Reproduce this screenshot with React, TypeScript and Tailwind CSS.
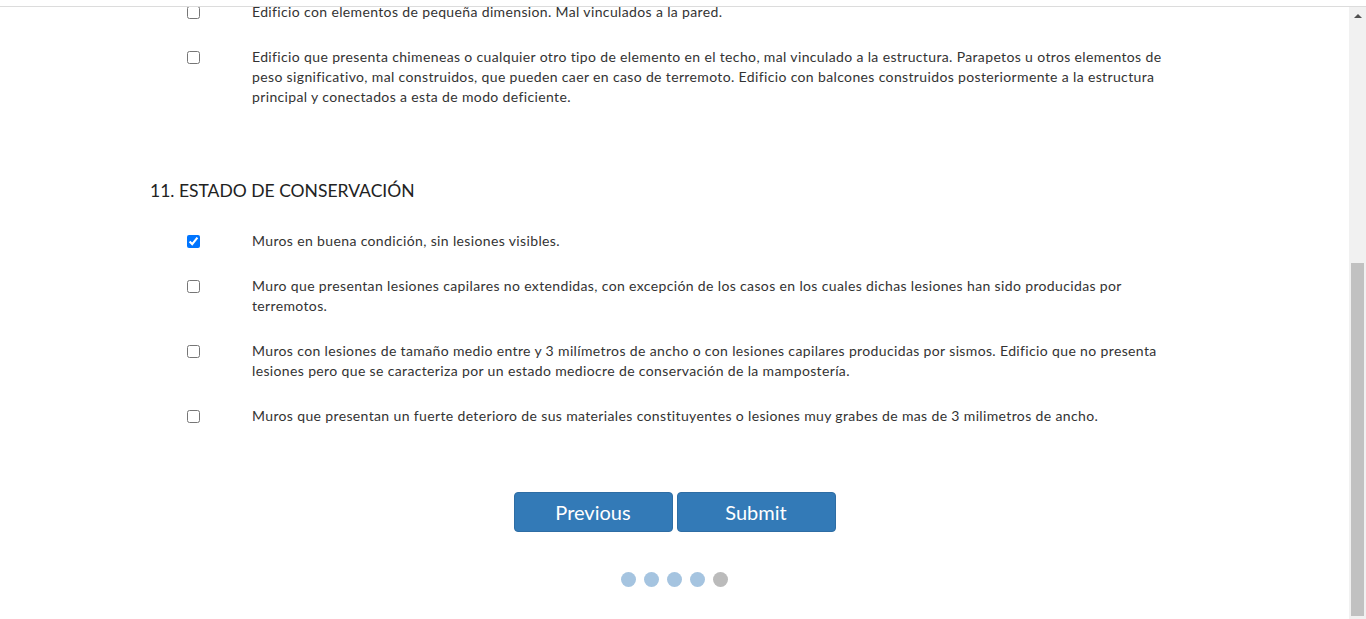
import React from 'react';

type Item = { lines: string[]; checked?: boolean };

const prevItems: Item[] = [
    { lines: ["Edificio con elementos de pequeña dimension. Mal vinculados a la pared."] },
    {
        lines: [
            "Edificio que presenta chimeneas o cualquier otro tipo de elemento en el techo, mal vinculado a la estructura. Parapetos u otros elementos de",
            "peso significativo, mal construidos, que pueden caer en caso de terremoto. Edificio con balcones construidos posteriormente a la estructura",
            "principal y conectados a esta de modo deficiente.",
        ],
    },
];

const conservacion: Item[] = [
    { lines: ["Muros en buena condición, sin lesiones visibles."], checked: true },
    {
        lines: [
            "Muro que presentan lesiones capilares no extendidas, con excepción de los casos en los cuales dichas lesiones han sido producidas por",
            "terremotos.",
        ],
    },
    {
        lines: [
            "Muros con lesiones de tamaño medio entre y 3 milímetros de ancho o con lesiones capilares producidas por sismos. Edificio que no presenta",
            "lesiones pero que se caracteriza por un estado mediocre de conservación de la mampostería.",
        ],
    },
    { lines: ["Muros que presentan un fuerte deterioro de sus materiales constituyentes o lesiones muy grabes de mas de 3 milimetros de ancho."] },
];

const OptionRow = ({ item }: { item: Item }) => (
    <label className="flex items-start">
        <div className="w-[102px] pl-[37px] h-5 flex items-center shrink-0">
            <input type="checkbox" defaultChecked={item.checked} className="w-[13px] h-[13px] m-0" />
        </div>
        <p className="text-[14px] leading-5 tracking-[0.36px] text-[#333] whitespace-nowrap">
            {item.lines.map((l, i) => (
                <React.Fragment key={i}>
                    {l}
                    {i < item.lines.length - 1 && <br />}
                </React.Fragment>
            ))}
        </p>
    </label>
);

const App = () => {
    return (
        <div className="h-[619px] w-full overflow-hidden bg-white flex flex-col" style={{ fontFamily: "Lato, 'Liberation Sans', sans-serif" }}>
            <div className="h-[7px] shrink-0 border-b border-[#dcdcdc] bg-white" />
            <div className="flex flex-1 min-h-0">
                <main className="flex-1 overflow-hidden">
                    <div className="pl-[150px] -mt-[5px]">
                        {/* previous section tail */}
                        <div className="flex flex-col gap-[25px]">
                            {prevItems.map((it, i) => <OptionRow key={i} item={it} />)}
                        </div>

                        <h3 className="mt-[70px] text-[17.5px] leading-[28px] text-[#222]">11. ESTADO DE CONSERVACIÓN</h3>

                        <div className="mt-[26px] flex flex-col gap-[25px]">
                            {conservacion.map((it, i) => <OptionRow key={i} item={it} />)}
                        </div>
                    </div>

                    {/* nav */}
                    <div className="mt-[66px] flex justify-center gap-1">
                        <button className="w-[159px] h-10 rounded bg-[#337ab7] border border-[#2e6da4] text-white text-[20px]">Previous</button>
                        <button className="w-[159px] h-10 rounded bg-[#337ab7] border border-[#2e6da4] text-white text-[20px]">Submit</button>
                    </div>

                    <div className="mt-[40px] flex justify-center gap-[8px]">
                        {[0, 1, 2, 3].map(i => (
                            <span key={i} className="w-[15px] h-[15px] rounded-full bg-[#a5c4e0]" />
                        ))}
                        <span className="w-[15px] h-[15px] rounded-full bg-[#bbbbbb]" />
                    </div>
                </main>

                {/* scrollbar */}
                <div className="w-[17px] shrink-0 bg-[#f1f1f1] flex flex-col items-center">
                    <div className="h-[14px] flex items-center justify-center pt-[4px]">
                        <div className="w-0 h-0 border-l-[4px] border-r-[4px] border-b-[4px] border-l-transparent border-r-transparent border-b-[#505050]" />
                    </div>
                    <div className="flex-1" />
                    <div className="w-[13px] h-[353px] bg-[#c1c1c1] mb-[3px]" />
                </div>
            </div>
        </div>
    );
};

export default App;
